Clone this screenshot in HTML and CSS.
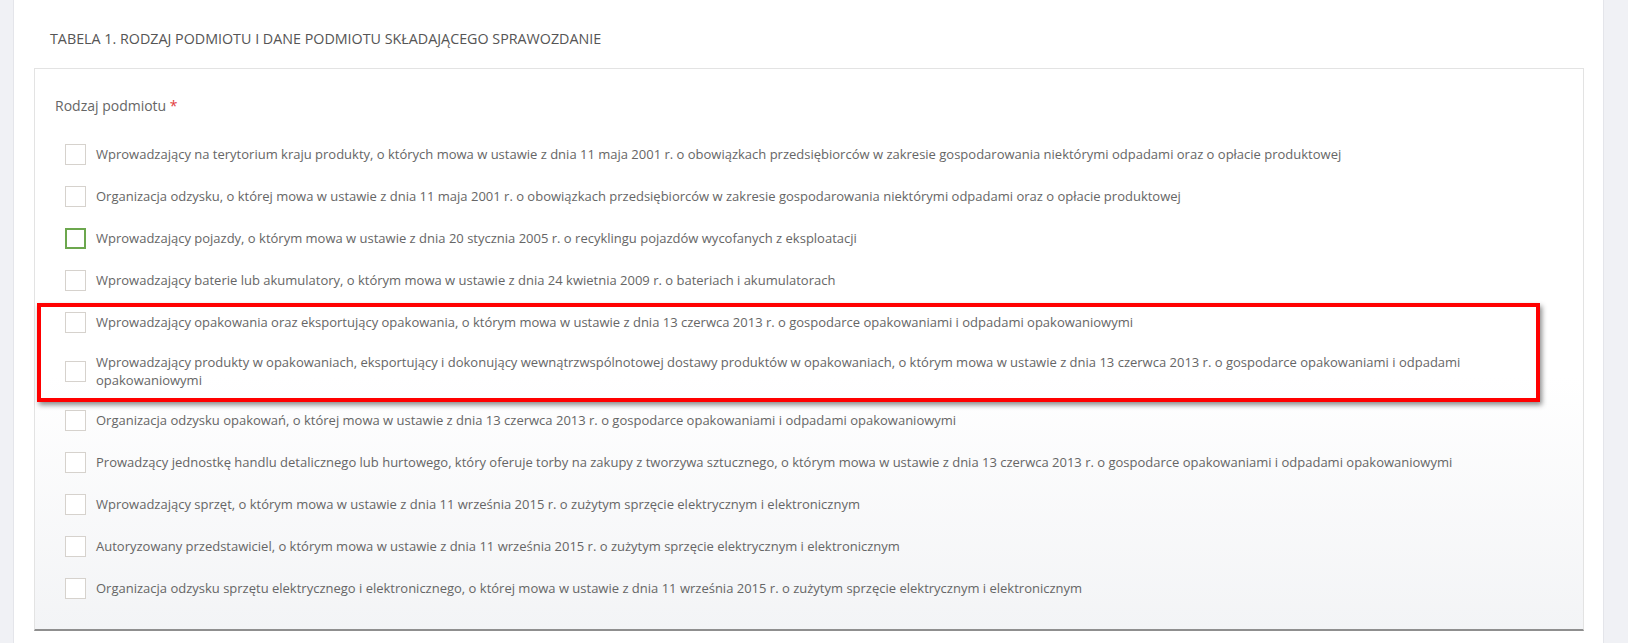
FILE: index.html
```html
<!DOCTYPE html>
<html lang="pl">
<head>
<meta charset="utf-8">
<title>Tabela 1</title>
<link rel="stylesheet" href="styles.css">
</head>
<body>
<div class="page">
  <h2 class="section-title">TABELA 1. RODZAJ PODMIOTU I DANE PODMIOTU SKŁADAJĄCEGO SPRAWOZDANIE</h2>
  <div class="card">
    <div class="field-label">Rodzaj podmiotu <span class="req">*</span></div>
    <ul class="options">
      <li class="option"><span class="box"></span><span class="text">Wprowadzający na terytorium kraju produkty, o których mowa w ustawie z dnia 11 maja 2001 r. o obowiązkach przedsiębiorców w zakresie gospodarowania niektórymi odpadami oraz o opłacie produktowej</span></li>
      <li class="option"><span class="box"></span><span class="text">Organizacja odzysku, o której mowa w ustawie z dnia 11 maja 2001 r. o obowiązkach przedsiębiorców w zakresie gospodarowania niektórymi odpadami oraz o opłacie produktowej</span></li>
      <li class="option"><span class="box focus"></span><span class="text">Wprowadzający pojazdy, o którym mowa w ustawie z dnia 20 stycznia 2005 r. o recyklingu pojazdów wycofanych z eksploatacji</span></li>
      <li class="option"><span class="box"></span><span class="text">Wprowadzający baterie lub akumulatory, o którym mowa w ustawie z dnia 24 kwietnia 2009 r. o bateriach i akumulatorach</span></li>
      <li class="option"><span class="box"></span><span class="text">Wprowadzający opakowania oraz eksportujący opakowania, o którym mowa w ustawie z dnia 13 czerwca 2013 r. o gospodarce opakowaniami i odpadami opakowaniowymi</span></li>
      <li class="option"><span class="box"></span><span class="text">Wprowadzający produkty w opakowaniach, eksportujący i dokonujący wewnątrzwspólnotowej dostawy produktów w opakowaniach, o którym mowa w ustawie z dnia 13 czerwca 2013 r. o gospodarce opakowaniami i odpadami opakowaniowymi</span></li>
      <li class="option"><span class="box"></span><span class="text">Organizacja odzysku opakowań, o której mowa w ustawie z dnia 13 czerwca 2013 r. o gospodarce opakowaniami i odpadami opakowaniowymi</span></li>
      <li class="option"><span class="box"></span><span class="text">Prowadzący jednostkę handlu detalicznego lub hurtowego, który oferuje torby na zakupy z tworzywa sztucznego, o którym mowa w ustawie z dnia 13 czerwca 2013 r. o gospodarce opakowaniami i odpadami opakowaniowymi</span></li>
      <li class="option"><span class="box"></span><span class="text">Wprowadzający sprzęt, o którym mowa w ustawie z dnia 11 września 2015 r. o zużytym sprzęcie elektrycznym i elektronicznym</span></li>
      <li class="option"><span class="box"></span><span class="text">Autoryzowany przedstawiciel, o którym mowa w ustawie z dnia 11 września 2015 r. o zużytym sprzęcie elektrycznym i elektronicznym</span></li>
      <li class="option"><span class="box"></span><span class="text">Organizacja odzysku sprzętu elektrycznego i elektronicznego, o której mowa w ustawie z dnia 11 września 2015 r. o zużytym sprzęcie elektrycznym i elektronicznym</span></li>
    </ul>
  </div>
  <div class="highlight"></div>
</div>
</body>
</html>
```

FILE: styles.css
```css
html, body {
  margin: 0;
  padding: 0;
}
body {
  background: #f0f1f5;
  font-family: "Open Sans", "Liberation Sans", sans-serif;
  color: #666;
  overflow: hidden;
}
.page {
  position: relative;
  margin-left: 13px;
  width: 1591px;
  min-height: 643px;
  box-sizing: border-box;
  background: #fff;
  border-left: 1px solid #e4e5ea;
  border-right: 1px solid #e4e5ea;
  padding: 0 19px 0 20px;
}
.section-title {
  margin: 0;
  padding: 30px 0 20px 16px;
  font-size: 14.3px;
  font-weight: 400;
  line-height: 18px;
  color: #555;
}
.card {
  border: 1px solid #e3e3e3;
  border-bottom: 2px solid #8f8f8f;
  background: linear-gradient(#fff 55%, #f3f4f6);
  padding: 27px 20px 20px 20px;
}
.field-label {
  font-size: 14px;
  line-height: 20px;
  color: #666;
  margin-bottom: 17px;
}
.req {
  color: #e23c3c;
}
.options {
  list-style: none;
  margin: 0;
  padding: 0 60px 0 10px;
}
.option {
  display: flex;
  align-items: center;
  padding: 10px 0;
  min-height: 22px;
}
.box {
  flex: none;
  width: 21px;
  height: 21px;
  box-sizing: border-box;
  border: 1px solid #d6d2cd;
  background: #fff;
  margin-right: 10px;
}
.box.focus {
  border: 2px solid #6ca74e;
}
.text {
  font-size: 13px;
  line-height: 18px;
  color: #666;
}
.highlight {
  position: absolute;
  left: 23px;
  top: 303px;
  width: 1503px;
  height: 99px;
  box-sizing: border-box;
  border: 4px solid #ff0000;
  box-shadow: 2px 3px 5px rgba(0, 0, 0, 0.45);
  pointer-events: none;
}
```
